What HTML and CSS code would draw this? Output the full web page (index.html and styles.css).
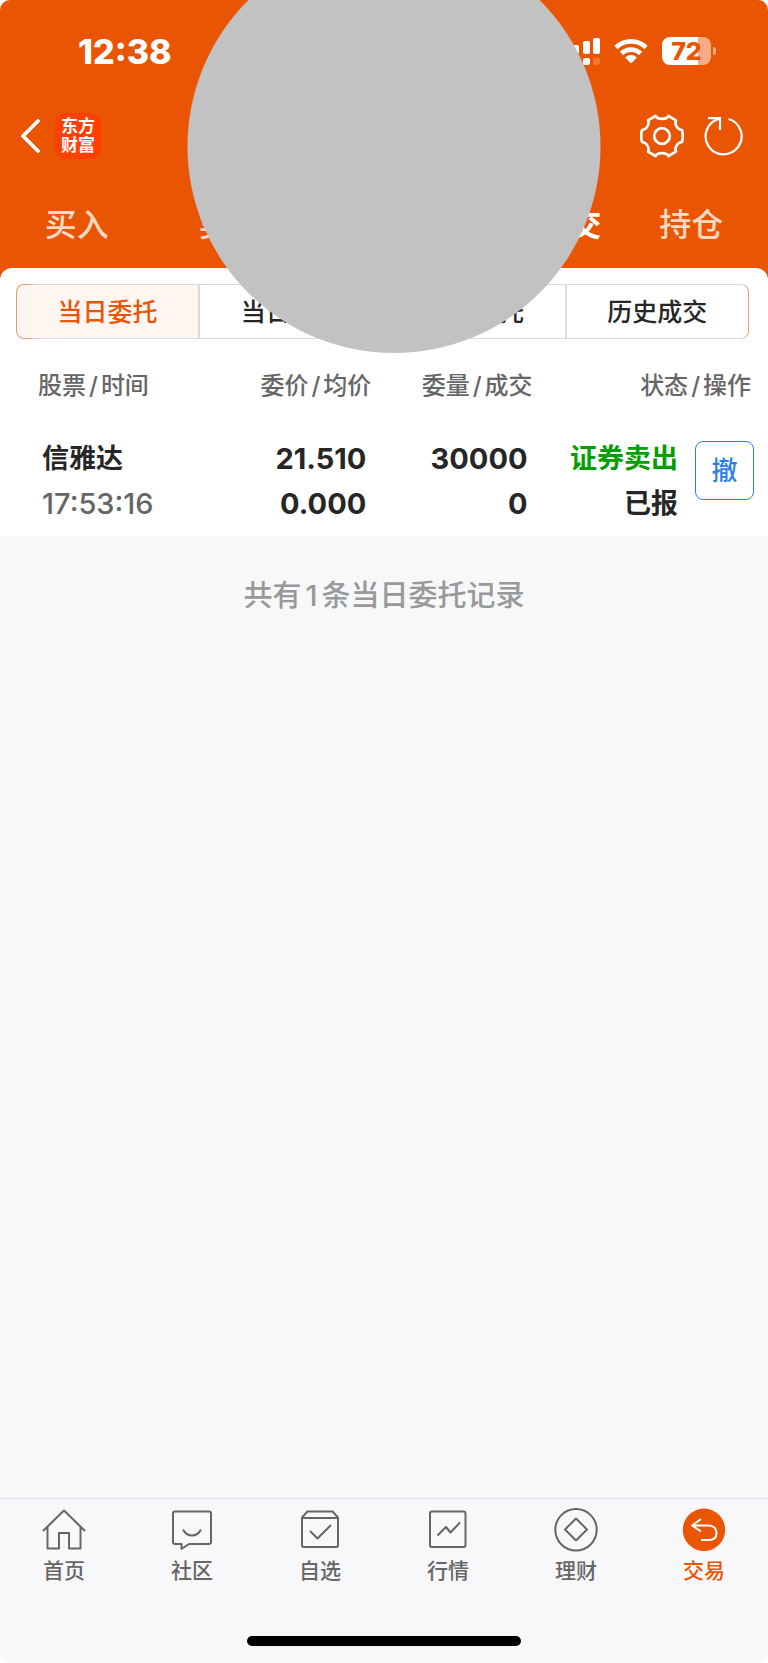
FILE: index.html
```html
<!DOCTYPE html>
<html lang="zh-CN">
<head>
    <meta charset="UTF-8">
    <meta name="viewport" content="width=device-width, initial-scale=1.0">
    <title>当日委托</title>
    <link rel="stylesheet" href="styles.css">
</head>
<body>
    <div class="app">
        <header class="header">
            <div class="status-bar">
                <span class="time">12:38</span>
                <div class="status-icons">
                    <svg width="40" height="28" viewBox="0 0 40 28" fill="#fff">
                        <rect x="1" y="12" width="7" height="5" rx="2"/>
                        <rect x="12" y="8" width="7" height="9" rx="2"/>
                        <rect x="23" y="4" width="7" height="13" rx="2"/>
                        <rect x="33" y="1" width="7" height="16" rx="2"/>
                        <rect x="12" y="21" width="7" height="7" rx="2"/>
                        <rect x="23" y="21" width="7" height="7" rx="2"/>
                        <rect x="33" y="21" width="7" height="7" rx="2" opacity=".2"/>
                    </svg>
                    <svg width="34" height="26" viewBox="0 0 34 26" fill="none" stroke="#fff" stroke-width="4.6">
                        <path d="M2 9.5A21.5 21.5 0 0 1 32 9.5"/>
                        <path d="M7.5 15.5A13.6 13.6 0 0 1 26.5 15.5"/>
                        <path d="M11.2 19.4A8.3 8.3 0 0 1 22.8 19.4L18 24.4Q17 25.4 16 24.4Z" fill="#fff" stroke="none"/>
                    </svg>
                    <div class="battery"><span>72</span></div>
                </div>
            </div>

            <div class="nav">
                <button class="icon-btn" aria-label="返回">
                    <svg width="20" height="34" viewBox="0 0 20 34" fill="none" stroke="#fff" stroke-width="3.8" stroke-linecap="round" stroke-linejoin="round">
                        <path d="M18 2L3 17L18 32"/>
                    </svg>
                </button>
                <div class="logo">东方<br>财富</div>
                <button class="icon-btn settings" aria-label="设置">
                    <svg width="44" height="44" viewBox="0 0 44 44" fill="none" stroke="#fff" stroke-width="2.7" stroke-linejoin="round">
                        <path d="M15.5 2Q17 4.8 22 4.8T28.5 2L36 6.3Q34.8 9 36.3 12Q38 15.3 42 16Q43.6 22 42 28Q38 28.7 36.3 32Q34.8 35 36 37.7L28.5 42Q27 39.2 22 39.2T15.5 42L8 37.7Q9.2 35 7.7 32Q6 28.7 2 28Q.4 22 2 16Q6 15.3 7.7 12Q9.2 9 8 6.3Z"/>
                        <circle cx="22" cy="22" r="7.8"/>
                    </svg>
                </button>
                <button class="icon-btn" aria-label="刷新">
                    <svg width="40" height="44" viewBox="0 0 40 44" fill="none" stroke="#fff" stroke-width="2.2">
                        <path d="M24.5 5A18 18 0 1 1 15.5 4.8"/>
                        <path d="M4 4.2H16V16"/>
                    </svg>
                </button>
            </div>

            <nav class="tabs">
                <a href="#">买入</a>
                <a href="#">卖出</a>
                <a href="#">撤单</a>
                <a href="#" class="active">委托成交</a>
                <a href="#">持仓</a>
            </nav>
            <div class="mask"></div>
        </header>

        <main class="main">
            <section class="panel">
                <div class="segments">
                    <button class="active">当日委托</button>
                    <button>当日成交</button>
                    <button>历史委托</button>
                    <button>历史成交</button>
                </div>

                <table class="orders">
                    <colgroup>
                        <col class="col-stock">
                        <col class="col-price">
                        <col class="col-amount">
                        <col>
                        <col class="col-action">
                    </colgroup>
                    <thead>
                        <tr>
                            <th>股票<i>/</i>时间</th>
                            <th>委价<i>/</i>均价</th>
                            <th>委量<i>/</i>成交</th>
                            <th colspan="2">状态<i>/</i>操作</th>
                        </tr>
                    </thead>
                    <tbody>
                        <tr>
                            <td>信雅达<br><span class="order-time">17:53:16</span></td>
                            <td class="num">21.510<br>0.000</td>
                            <td class="num">30000<br>0</td>
                            <td class="status"><span class="sell">证券卖出</span><br>已报</td>
                            <td class="action"><button class="cancel-btn">撤</button></td>
                        </tr>
                    </tbody>
                </table>
            </section>
            <p class="summary">共有<span>1</span>条当日委托记录</p>
        </main>

        <footer class="footer">
            <nav class="tab-bar">
                <a href="#">
                    <svg width="44" height="44" viewBox="0 0 44 44">
                        <path d="M1 23L22 2.5L43 23M5.5 19V40.5H17V25H27V40.5H38.5V19"/>
                    </svg>
                    首页
                </a>
                <a href="#">
                    <svg width="44" height="44" viewBox="0 0 44 44">
                        <path d="M5 3.5H39Q41 3.5 41 5.5V34Q41 36 39 36H19L11.5 41V36H5Q3 36 3 34V5.5Q3 3.5 5 3.5Z"/>
                        <path d="M13 21.5Q16 27.5 22 27.5T31 21.5"/>
                    </svg>
                    社区
                </a>
                <a href="#">
                    <svg width="44" height="44" viewBox="0 0 44 44">
                        <path d="M4 9.5L9.5 3.5H34.5L40 9.5V37Q40 39 38 39H6Q4 39 4 37ZM4 10H40"/>
                        <path d="M12 23L19.5 30.5L33 17"/>
                    </svg>
                    自选
                </a>
                <a href="#">
                    <svg width="44" height="44" viewBox="0 0 44 44">
                        <rect x="4" y="3.5" width="35.5" height="35.5" rx="2"/>
                        <path d="M11.5 27.5L20 19L24.5 24.5L34 14.5"/>
                    </svg>
                    行情
                </a>
                <a href="#">
                    <svg width="44" height="44" viewBox="0 0 44 44">
                        <circle cx="22" cy="21.8" r="20.7"/>
                        <path d="M22 10.5L33 21.5L22 32.5L11 21.5Z"/>
                    </svg>
                    理财
                </a>
                <a href="#" class="active">
                    <svg width="44" height="44" viewBox="0 0 44 44">
                        <circle cx="22" cy="21.8" r="21.2" fill="#ea5504" stroke="none"/>
                        <path d="M19 11L10 17.5L19 23.5M10 17.5H26.5Q34.5 18 34.5 25T26.5 32H19" stroke="#fff"/>
                    </svg>
                    交易
                </a>
            </nav>
            <div class="home-indicator"></div>
        </footer>
    </div>
</body>
</html>
```

FILE: styles.css
```css
:root {
    --primary: #ea5504;
    --background: #f7f8fa;
    --text: #262626;
    --muted: #666666;
    --line: #d9dbe2;
    --blue: #2b7de9;
}

* {
    margin: 0;
    padding: 0;
    box-sizing: border-box;
}

body {
    background: #ffffff;
    color: var(--text);
    font-family: Inter, "Noto Sans CJK SC", sans-serif;
}

button {
    font: inherit;
    color: inherit;
    background: none;
    border: none;
    cursor: pointer;
}

a {
    color: inherit;
    text-decoration: none;
}

svg {
    display: block;
}

.app {
    display: flex;
    flex-direction: column;
    min-height: 100vh;
    background: var(--background);
    border-radius: 10px;
}

/* Header */
.header {
    position: relative;
    padding-bottom: 12px;
    background: var(--primary);
    color: #ffffff;
    border-radius: 10px 10px 0 0;
}

.status-bar {
    display: flex;
    align-items: center;
    justify-content: space-between;
    height: 102px;
    padding: 0 57px 0 78px;
}

.time {
    font-size: 34px;
    font-weight: 800;
}

.status-icons {
    display: flex;
    align-items: center;
    gap: 14px;
}

.battery {
    position: relative;
    width: 49px;
    height: 28px;
    border-radius: 8px;
    background: linear-gradient(to right, #ffffff 73%, #f5ab83 73%);
    color: var(--primary);
    font-size: 25px;
    font-weight: 800;
    line-height: 28px;
    text-align: center;
}

.battery::after {
    content: "";
    position: absolute;
    top: 10px;
    right: -5px;
    width: 3px;
    height: 8px;
    border-radius: 0 3px 3px 0;
    background: #f5ab83;
}

.nav {
    display: flex;
    align-items: center;
    height: 68px;
    padding: 0 24px 0 20px;
}

.logo {
    width: 46px;
    height: 46px;
    margin-left: 15px;
    padding-top: 4px;
    border-radius: 10px;
    background: #ff4000;
    font-size: 17px;
    font-weight: 700;
    line-height: 19px;
    text-align: center;
}

.settings {
    margin-left: auto;
    margin-right: 20px;
}

.tabs {
    display: grid;
    grid-template-columns: repeat(5, 1fr);
    height: 98px;
    padding-top: 31px;
    font-size: 32px;
    font-weight: 500;
    line-height: 48px;
    text-align: center;
    color: #ffd9c2;
}

.tabs .active {
    color: #ffffff;
    font-weight: 700;
}

.mask {
    position: absolute;
    z-index: 1;
    top: -60px;
    left: calc(50% + 10px);
    width: 413px;
    height: 413px;
    transform: translateX(-50%);
    border-radius: 50%;
    background: #c2c2c2;
}

/* Orders */
.main {
    flex: 1;
}

.panel {
    position: relative;
    margin-top: -12px;
    padding-top: 16px;
    background: #ffffff;
    border-radius: 12px 12px 0 0;
}

.segments {
    display: grid;
    grid-template-columns: repeat(4, 1fr);
    gap: 2px;
    height: 55px;
    margin: 0 19px 0 16px;
    padding: 1px;
    border-radius: 8px;
    background: linear-gradient(to right, #e59a73 12px, var(--line) 20px, var(--line) calc(100% - 8px), #e59a73);
    font-size: 25px;
    font-weight: 500;
}

.segments button {
    padding-bottom: 3px;
    background: #ffffff;
}

.segments button:first-child {
    border-radius: 7px 0 0 7px;
}

.segments button:last-child {
    border-radius: 0 7px 7px 0;
}

.segments .active {
    background: #fff5f1;
    color: var(--primary);
}

.orders {
    width: 100%;
    border-collapse: collapse;
    table-layout: fixed;
    text-align: right;
}

.col-stock {
    width: 227px;
}

.col-price,
.col-amount {
    width: 21%;
}

.col-action {
    width: 74px;
}

.orders th {
    height: 88px;
    padding-right: 17px;
    color: var(--muted);
    font-size: 24px;
    font-weight: 500;
}

.orders th i {
    margin: 0 3px;
    font-style: normal;
}

.orders th:first-child {
    padding-left: 38px;
    text-align: left;
}

.orders td {
    height: 108px;
    padding: 9px 22px 9px 0;
    font-size: 27px;
    font-weight: 700;
    line-height: 45px;
    vertical-align: top;
}

.orders td:first-child {
    padding-left: 42px;
    padding-right: 0;
    text-align: left;
}

.orders .num,
.orders .order-time {
    font-size: 29px;
}

.orders .order-time {
    color: var(--muted);
    font-weight: 500;
}

.orders .status {
    padding-right: 16px;
}

.orders .sell {
    color: #00a000;
}

.orders .action {
    padding: 14px 14px 0 0;
}

.cancel-btn {
    display: block;
    width: 59px;
    height: 59px;
    margin-left: auto;
    border: 1px solid var(--blue);
    border-radius: 8px;
    color: var(--blue);
    font-size: 26px;
    font-weight: 500;
    line-height: 45px;
}

.summary {
    padding-top: 38px;
    color: #999999;
    font-size: 29px;
    font-weight: 500;
    line-height: 44px;
    text-align: center;
}

.summary span {
    margin: 0 4px;
}

/* Bottom bar */
.footer {
    padding-bottom: 17px;
    border-top: 1px solid #dfe2e8;
    border-radius: 0 0 10px 10px;
    background: #f8f8fb;
}

.tab-bar {
    display: grid;
    grid-template-columns: repeat(6, 1fr);
    height: 137px;
    padding-top: 9px;
    color: var(--muted);
    font-size: 21px;
    font-weight: 500;
    line-height: 38px;
}

.tab-bar a {
    display: flex;
    flex-direction: column;
    align-items: center;
}

.tab-bar svg {
    fill: none;
    stroke: #666666;
    stroke-width: 2;
    stroke-linejoin: round;
}

.tab-bar .active {
    color: var(--primary);
}

.home-indicator {
    width: 274px;
    height: 10px;
    margin: 0 auto;
    border-radius: 5px;
    background: #000000;
}
```
